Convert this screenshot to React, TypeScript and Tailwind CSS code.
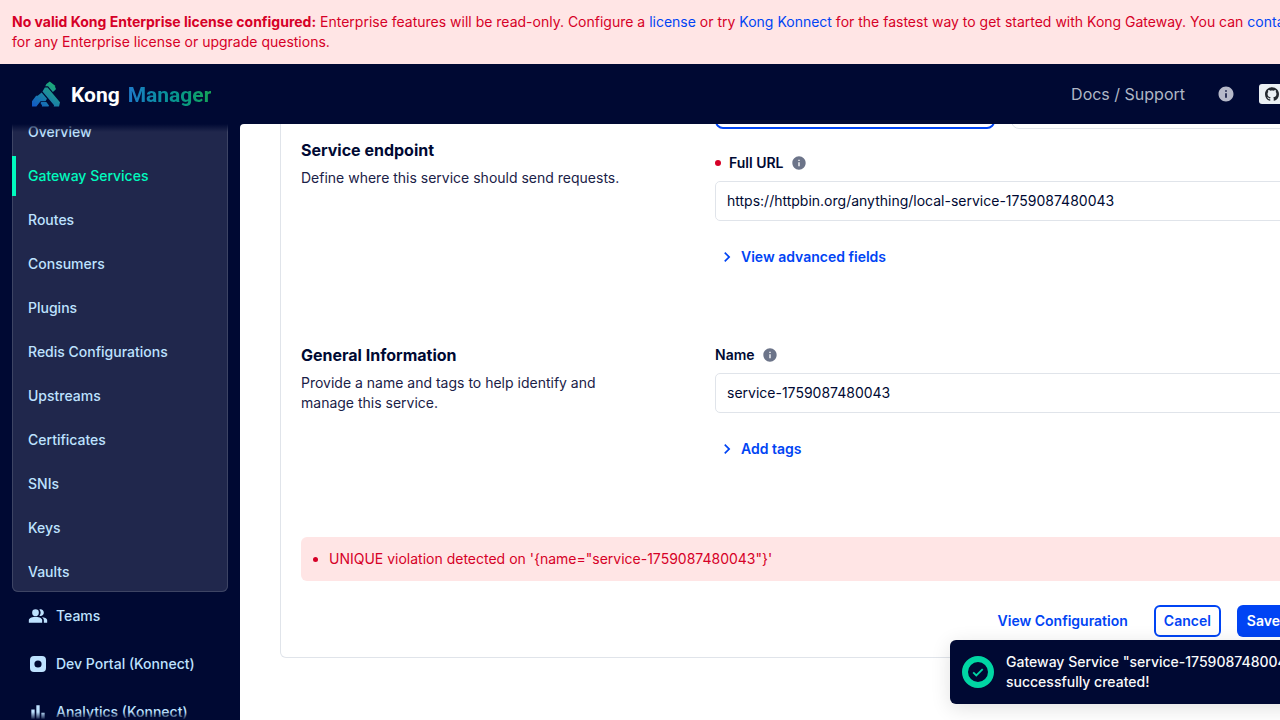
import type { ReactNode } from "react";
import { MdBarChart, MdChevronRight, MdInfo, MdPeopleAlt } from "react-icons/md";
import { SiGithub, SiKong } from "react-icons/si";

const gatewayLinks = [
  "Overview",
  "Gateway Services",
  "Routes",
  "Consumers",
  "Plugins",
  "Redis Configurations",
  "Upstreams",
  "Certificates",
  "SNIs",
  "Keys",
  "Vaults",
];

function LicenseBanner() {
  return (
    <div className="shrink-0 bg-[#ffe5e5] px-3 pt-3 pb-3 leading-5 text-[#d60027]">
      <strong className="font-bold">No valid Kong Enterprise license configured:</strong>{" "}
      Enterprise features will be read-only. Configure a{" "}
      <a href="#license" className="text-[#0044f4]">license</a> or try{" "}
      <a href="#konnect" className="text-[#0044f4]">Kong Konnect</a> for the fastest way to get
      started with Kong Gateway. You can{" "}
      <a href="#contact" className="text-[#0044f4]">contact support</a> for any Enterprise license
      or upgrade questions.
    </div>
  );
}

function Logo() {
  return (
    <a href="#home" className="flex items-center gap-[11px]" aria-label="Kong Manager">
      <svg width="0" height="0" className="absolute">
        <linearGradient id="kong-mark" x1="0" y1="1" x2="0.8" y2="0">
          <stop offset="0" stopColor="#1155cb" />
          <stop offset="0.6" stopColor="#1d8f9a" />
          <stop offset="1" stopColor="#1bb06c" />
        </linearGradient>
      </svg>
      <SiKong size={28} fill="url(#kong-mark)" />
      <span className="flex gap-2 pt-0.5 font-['Roboto'] text-[21px] leading-7 font-bold">
        <span className="text-white">Kong</span>
        <span className="bg-linear-to-r from-[#1e7ac8] to-[#16a356] bg-clip-text text-transparent">
          Manager
        </span>
      </span>
    </a>
  );
}

function Header() {
  return (
    <header className="flex h-15 shrink-0 items-center justify-between pr-6 pl-8">
      <Logo />
      <div className="flex items-center">
        <a href="#docs" className="text-base text-[#afb7c5]">Docs / Support</a>
        <button type="button" aria-label="About" className="ml-8 text-[#b6b9c9]">
          <MdInfo size={18} />
        </button>
        <a
          href="#github"
          className="ml-6 flex h-5 w-[83px] items-center gap-1 rounded-[3px] bg-[#ebf0f4] px-1.5 font-['Liberation_Sans'] text-[11px] font-bold text-[#24292f]"
        >
          <SiGithub size={14} />
          Star
        </a>
      </div>
    </header>
  );
}

function SideLink({ icon, children }: { icon: ReactNode; children: ReactNode }) {
  return (
    <a href="#section" className="flex h-11 items-center gap-2 px-4">
      {icon}
      {children}
    </a>
  );
}

function Sidebar() {
  return (
    <nav className="relative w-60 shrink-0 overflow-hidden px-3 font-medium text-[#bee2ff]">
      <div className="-mt-3 flex flex-col gap-1 rounded-b-md bg-[#20274c] shadow-[inset_0_0_0_1px_#3d4464]">
        {gatewayLinks.map((name) =>
          name === "Gateway Services" ? (
            <a
              key={name}
              href="#section"
              aria-current="page"
              className="flex h-10 items-center border-l-4 border-[#00fabe] pl-3 text-[#00fabe]"
            >
              {name}
            </a>
          ) : (
            <a key={name} href="#section" className="flex h-10 items-center pl-4">
              {name}
            </a>
          ),
        )}
      </div>
      <div className="mt-0.5 flex flex-col gap-1">
        <SideLink icon={<MdPeopleAlt size={20} />}>Teams</SideLink>
        <SideLink
          icon={
            <svg width="20" height="20" viewBox="0 0 20 20" fill="currentColor" fillRule="evenodd">
              <path d="M6 2h8a4 4 0 0 1 4 4v8a4 4 0 0 1-4 4H6a4 4 0 0 1-4-4V6a4 4 0 0 1 4-4Zm4 4.4a3.6 3.6 0 1 0 0 7.2 3.6 3.6 0 0 0 0-7.2Z" />
            </svg>
          }
        >
          Dev Portal (Konnect)
        </SideLink>
        <SideLink icon={<MdBarChart size={20} />}>Analytics (Konnect)</SideLink>
      </div>
      <div className="pointer-events-none absolute inset-x-0 top-0 h-2 bg-linear-to-b from-[#000933] to-transparent" />
      <div className="pointer-events-none absolute inset-x-0 bottom-0 h-2 bg-linear-to-t from-[#000933] to-transparent" />
    </nav>
  );
}

function SectionIntro({ title, children }: { title: string; children: ReactNode }) {
  return (
    <div className="max-w-80">
      <h2 className="text-base leading-5 font-bold">{title}</h2>
      <p className="mt-2 leading-5 text-[#1a2147]">{children}</p>
    </div>
  );
}

function Field({ id, label, value, required }: { id: string; label: string; value: string; required?: boolean }) {
  return (
    <div className="flex flex-col gap-2">
      <div className="flex h-5 items-center">
        {required && <span className="mr-2 size-1.5 rounded-full bg-[#d60027]" />}
        <label htmlFor={id} className="font-semibold">{label}</label>
        <MdInfo size={16} className="ml-[7px] text-[#6c7489]" />
      </div>
      <input
        id={id}
        defaultValue={value}
        className="h-10 w-full rounded-[5px] border border-[#e0e4ea] bg-white px-[11px] pb-0.5 text-[#000933] outline-none"
      />
    </div>
  );
}

function Disclosure({ children }: { children: ReactNode }) {
  return (
    <button type="button" className="mt-5 flex h-8 items-center gap-1 pl-0.5 font-semibold text-[#0044f4]">
      <MdChevronRight size={20} />
      {children}
    </button>
  );
}

function ServiceForm() {
  return (
    <main className="min-w-0 flex-1 overflow-hidden rounded-tl bg-white pr-[55px] pl-10 text-[#000933]">
      <form className="rounded-b-md border border-t-0 border-[#e0e4ea] px-5 pb-5">
        <section className="grid grid-cols-[374px_1fr] gap-10">
          <div className="pt-4">
            <SectionIntro title="Service endpoint">
              Define where this service should send requests.
            </SectionIntro>
          </div>
          <div>
            <div className="mb-6 grid h-[5px] grid-cols-2 content-end gap-4 overflow-hidden">
              <div className="h-16 rounded-lg border-2 border-[#0044f4]" />
              <div className="h-16 rounded-lg border border-[#e0e4ea]" />
            </div>
            <Field
              id="full-url"
              label="Full URL"
              value="https://httpbin.org/anything/local-service-1759087480043"
              required
            />
            <Disclosure>View advanced fields</Disclosure>
          </div>
        </section>
        <section className="mt-18 grid grid-cols-[374px_1fr] gap-10">
          <SectionIntro title="General Information">
            Provide a name and tags to help identify and manage this service.
          </SectionIntro>
          <div>
            <Field id="name" label="Name" value="service-1759087480043" />
            <Disclosure>Add tags</Disclosure>
          </div>
        </section>
        <ul role="alert" className="mt-18 list-disc rounded-md bg-[#ffe5e5] py-3 pr-3 pl-7 leading-5 text-[#d60027]">
          <li>{`UNIQUE violation detected on '{name="service-1759087480043"}'`}</li>
        </ul>
        <div className="mt-6 flex justify-end gap-4 font-semibold text-[#0044f4]">
          <button type="button" className="h-8 px-2.5">View Configuration</button>
          <button type="button" className="h-8 rounded-md border-2 border-[#0044f4] px-2">Cancel</button>
          <button type="submit" className="h-8 rounded-md bg-[#0044f4] px-2.5 text-white">Save</button>
        </div>
      </form>
    </main>
  );
}

function Toast() {
  return (
    <div
      role="status"
      className="absolute right-4 bottom-4 flex w-100 items-center gap-3 rounded-md bg-[#000933] p-3 leading-5 font-medium text-[#f9fafb] shadow-[0_4px_20px_rgba(0,0,0,0.12)]"
    >
      <svg width="32" height="32" viewBox="0 0 32 32" fill="none" stroke="#00d6a4" className="shrink-0">
        <circle cx="16" cy="16" r="13" strokeWidth="6" />
        <path d="m11.2 16.4 3.1 3.1 6.4-6.4" strokeWidth="1.8" />
      </svg>
      <p>Gateway Service "service-1759087480043" successfully created!</p>
    </div>
  );
}

export default function App() {
  return (
    <div className="h-screen overflow-hidden bg-[#000933] font-['Inter',sans-serif] text-sm">
      <div className="relative flex h-full min-w-[1366px] flex-col">
        <LicenseBanner />
        <Header />
        <div className="flex min-h-0 flex-1">
          <Sidebar />
          <ServiceForm />
        </div>
        <Toast />
      </div>
    </div>
  );
}
